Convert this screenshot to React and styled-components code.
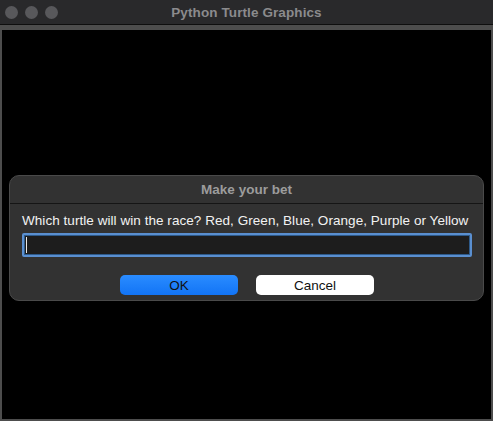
import React from 'react'
import styled, { createGlobalStyle } from 'styled-components'

const Global = createGlobalStyle`
  html, body {
    margin: 0;
    padding: 0;
    background: #000;
  }
  * { box-sizing: border-box; }
`

const Window = styled.div`
  width: 493px;
  height: 421px;
  display: flex;
  flex-direction: column;
  background: #4b4b4b;
  font-family: "Liberation Sans", Arial, sans-serif;
  overflow: hidden;
`

const TitleBar = styled.div`
  height: 25px;
  flex: none;
  display: flex;
  align-items: center;
  justify-content: center;
  position: relative;
  background: #29292b;
  border-bottom: 1px solid #0e0e0e;
`

const Lights = styled.div`
  position: absolute;
  left: 5px;
  top: 6px;
  display: flex;
  gap: 7px;
`

const Light = styled.span`
  width: 13px;
  height: 13px;
  border-radius: 50%;
  background: #58585b;
`

const Title = styled.div`
  color: #8b8b8d;
  font-size: 13.5px;
  font-weight: bold;
  letter-spacing: 0.1px;
`

const Frame = styled.div`
  flex: 1;
  display: flex;
  padding: 5px 2px 2px 2px;
  background: #4d4d4d;
`

const Canvas = styled.div`
  flex: 1;
  background: #000;
  padding: 145px 7px 0 7px;
`

const Dialog = styled.div`
  height: 126px;
  background: #323232;
  border: 1px solid #4a4a4a;
  border-radius: 10px;
  display: flex;
  flex-direction: column;
`

const DialogHeader = styled.div`
  height: 28px;
  flex: none;
  display: flex;
  align-items: center;
  justify-content: center;
  color: #9c9c9c;
  font-size: 13.5px;
  font-weight: bold;
  border-bottom: 1px solid #151515;
`

const DialogBody = styled.div`
  display: flex;
  flex-direction: column;
  padding: 9px 11px 0 12px;
`

const Label = styled.div`
  color: #f2f2f2;
  font-size: 13.5px;
  line-height: 15px;
  white-space: nowrap;
  letter-spacing: 0.05px;
`

const Input = styled.div`
  margin-top: 5px;
  height: 24px;
  border: 2px solid #5a8fd0;
  border-radius: 2px;
  background: #1d1d1d;
  box-shadow: inset 0 0 0 1px #2e5a8a;
  display: flex;
  align-items: center;
  padding-left: 2px;
`

const Caret = styled.span`
  width: 1px;
  height: 16px;
  background: #e8e8e8;
`

const Buttons = styled.div`
  display: flex;
  justify-content: center;
  gap: 18px;
  margin-top: 18px;
`

const Button = styled.div`
  width: 118px;
  height: 20px;
  border-radius: 5px;
  display: flex;
  align-items: center;
  justify-content: center;
  font-size: 13.5px;
  color: #111;
  background: ${p => (p.$primary ? 'linear-gradient(#2a8cff, #1274f5)' : '#ffffff')};
`

export default function App() {
  return (
    <>
      <Global />
      <Window>
        <TitleBar>
          <Lights>
            <Light />
            <Light />
            <Light />
          </Lights>
          <Title>Python Turtle Graphics</Title>
        </TitleBar>
        <Frame>
          <Canvas>
            <Dialog>
              <DialogHeader>Make your bet</DialogHeader>
              <DialogBody>
                <Label>Which turtle will win the race? Red, Green, Blue, Orange, Purple or Yellow</Label>
                <Input>
                  <Caret />
                </Input>
                <Buttons>
                  <Button $primary>OK</Button>
                  <Button>Cancel</Button>
                </Buttons>
              </DialogBody>
            </Dialog>
          </Canvas>
        </Frame>
      </Window>
    </>
  )
}
